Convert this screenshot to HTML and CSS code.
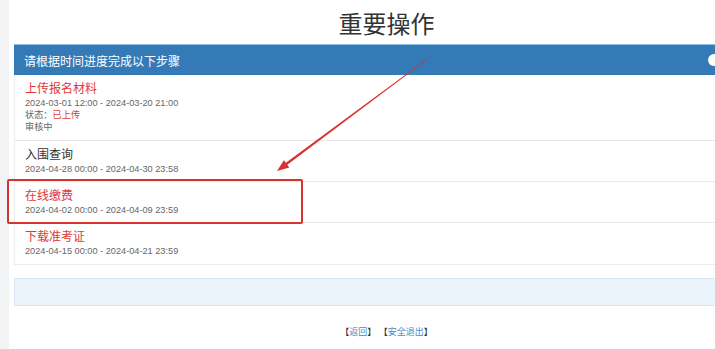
FILE: index.html
```html
<!DOCTYPE html>
<html lang="zh-CN">
  <head>
    <meta charset="UTF-8" />
    <title>重要操作</title>
    <link rel="stylesheet" href="styles.css">
  </head>
  <body>
    <div class="page">
      <h1 class="page-title">重要操作</h1>

      <div class="panel">
        <div class="panel-heading">
          <span>请根据时间进度完成以下步骤</span>
          <span class="dot"></span>
        </div>

        <ul class="steps">
          <!-- 上传 -->
          <li class="step active">
            <div class="step-name">上传报名材料</div>
            <div class="step-time">2024-03-01 12:00 - 2024-03-20 21:00</div>
            <div class="step-time">状态：<span class="hot">已上传</span></div>
            <div class="step-time">审核中</div>
          </li>
          <li class="step">
            <div class="step-name">入围查询</div>
            <div class="step-time">2024-04-28 00:00 - 2024-04-30 23:58</div>
          </li>
          <li class="step active">
            <div class="step-name">在线缴费</div>
            <div class="step-time">2024-04-02 00:00 - 2024-04-09 23:59</div>
          </li>
          <li class="step active">
            <div class="step-name">下载准考证</div>
            <div class="step-time">2024-04-15 00:00 - 2024-04-21 23:59</div>
          </li>
        </ul>
      </div>

      <div class="note-bar"></div>

      <div class="footer-links">
        【<a href="#">返回</a>】 【<a href="#">安全退出</a>】
      </div>
    </div>

    <!-- 标注 -->
    <div class="mark-box"></div>
    <svg class="mark-arrow" width="715" height="349" viewBox="0 0 715 349">
      <polygon
        fill="#d8322e"
        points="430.2,57.2 287.3,164.8 289.3,167.4 277,171 283.9,160.2 285.9,162.8 429.8,56.8"
      />
    </svg>
  </body>
</html>
```

FILE: styles.css
```css
html,
body {
  margin: 0;
  height: 100%;
  overflow: hidden;
}

body {
  background-color: #f1f3f5;
  font-family: "Liberation Sans", "Noto Sans CJK SC", sans-serif;
  color: #333;
  position: relative;
}

.page {
  margin-left: 9px;
  padding-left: 5px;
  min-height: 100%;
  background-color: #fff;
}

/* 原页面更宽，标题居中偏右 */
.page-title {
  margin: 0;
  padding: 8px 0 2px 44px;
  font-size: 24px;
  line-height: 34px;
  font-weight: normal;
  text-align: center;
  color: #333;
}

.panel {
  border: 1px solid #ececec;
  border-top: 0;
  border-right: 0;
}

.panel-heading {
  display: flex;
  align-items: center;
  justify-content: space-between;
  height: 31px;
  padding-left: 10px;
  margin-left: -1px;
  background-color: #337ab7;
  border-top: 1px solid #8ec0e8;
  box-sizing: border-box;
  overflow: hidden;
  color: #fff;
  font-size: 12px;
}

.dot {
  width: 12px;
  height: 12px;
  margin-right: -5px;
  border-radius: 50%;
  background-color: #fff;
}

.steps {
  list-style: none;
  margin: 0;
  padding: 0;
}

.step {
  padding: 6px 10px;
  border-bottom: 1px solid #e8e8e8;
}

.step:first-child {
  padding-bottom: 7px;
}

.step:last-child {
  padding-bottom: 7px;
  border-bottom: 0;
}

.step-name {
  font-size: 12px;
  line-height: 16px;
  color: #333;
}

.step.active .step-name {
  color: #e0393a;
}

.step-time {
  font-size: 9.2px;
  line-height: 12px;
  color: #666;
}

.hot {
  color: #e0393a;
}

.note-bar {
  height: 26px;
  margin-top: 13px;
  background-color: #ebf3fb;
  border: 1px solid #d9e6f1;
  border-right: 0;
}

.footer-links {
  margin-top: 20px;
  padding-left: 44px;
  text-align: center;
  font-size: 9px;
  line-height: 12px;
  color: #333;
}

.footer-links a {
  color: #4a8cc4;
  text-decoration: none;
}

/* 标注框和箭头 */
.mark-box {
  position: absolute;
  left: 7px;
  top: 179px;
  width: 296px;
  height: 45px;
  border: 2px solid #d8322e;
  border-radius: 2px;
  box-sizing: border-box;
}

.mark-arrow {
  position: absolute;
  left: 0;
  top: 0;
  pointer-events: none;
}
```
